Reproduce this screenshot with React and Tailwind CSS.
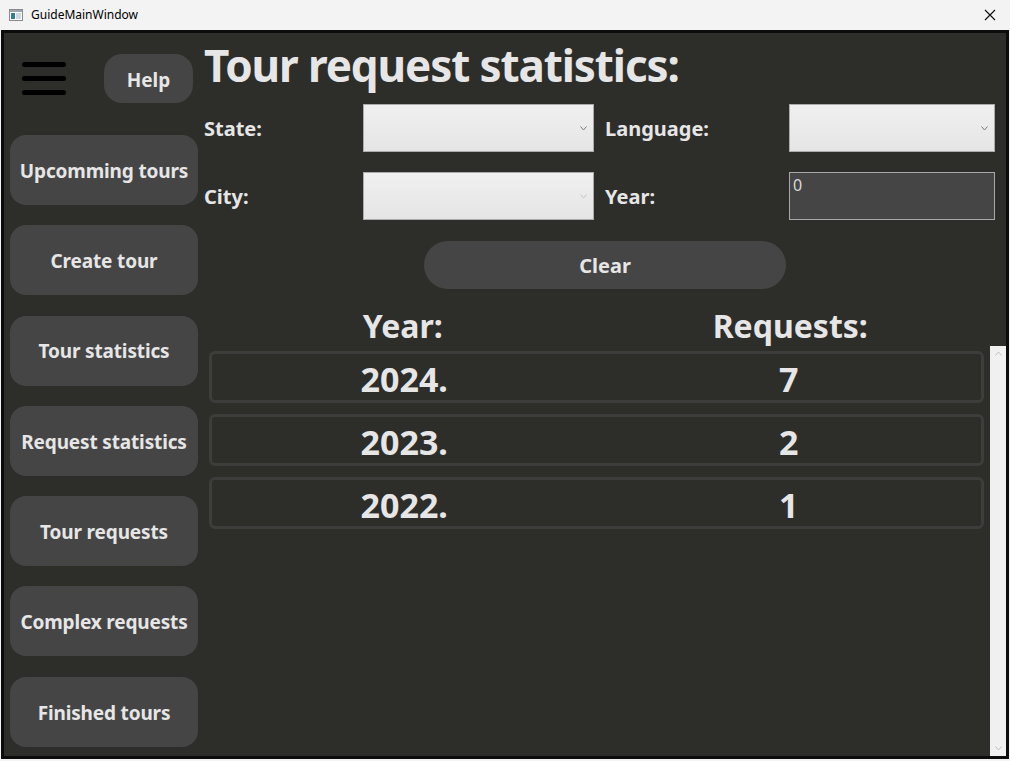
import React from "react";

const F = { fontFamily: '"Noto Sans", "Open Sans", sans-serif' };

function Chevron({ up = false, className = "" }) {
  return (
    <svg width="7" height="5" viewBox="0 0 7 5" className={className}>
      <path
        d={up ? "M0.5 4.5 L3.5 1 L6.5 4.5" : "M0.5 0.5 L3.5 4 L6.5 0.5"}
        fill="none"
        stroke="currentColor"
        strokeWidth="1"
      />
    </svg>
  );
}

function Combo({ faded = false }) {
  return (
    <div className="h-[48px] border border-[#acacac] bg-gradient-to-b from-[#f0f0f0] to-[#e5e5e5] flex items-center justify-end pr-[6px]">
      <Chevron className={faded ? "text-[#c4c4c4]" : "text-[#7a7a7a]"} />
    </div>
  );
}

const sideItems = [
  "Upcomming tours",
  "Create tour",
  "Tour statistics",
  "Request statistics",
  "Tour requests",
  "Complex requests",
  "Finished tours",
];

const rows = [
  ["2024.", "7"],
  ["2023.", "2"],
  ["2022.", "1"],
];

export default function App() {
  return (
    <div className="w-[1010px] h-[761px] bg-[#f3f3f3] flex flex-col overflow-hidden" style={F}>
      {/* title bar */}
      <div className="h-[30px] flex items-center pl-[9px] pr-[12px] shrink-0">
        <svg width="14" height="12" viewBox="0 0 14 12">
          <rect x="0.5" y="0.5" width="13" height="11" fill="#fff" stroke="#8a8a8a" />
          <rect x="1" y="1" width="12" height="2" fill="#9aa6b2" />
          <rect x="2" y="4" width="4" height="6" fill="#2f7f9a" />
          <rect x="7" y="4" width="5" height="6" fill="#cfd8dc" />
        </svg>
        <span className="ml-[8px] text-[12px] text-black" style={{ fontFamily: '"Noto Sans", sans-serif' }}>
          GuideMainWindow
        </span>
        <div className="flex-1" />
        <svg width="12" height="12" viewBox="0 0 12 12" className="mr-[2px]">
          <path d="M1 1 L11 11 M11 1 L1 11" stroke="#111" strokeWidth="1.2" />
        </svg>
      </div>

      {/* body */}
      <div className="flex-1 mx-[1px] mb-[2px] border-[3px] border-[#0c0c0c] bg-[#2d2d2a] flex min-h-0">
        {/* sidebar */}
        <div className="w-[199px] shrink-0 flex flex-col pl-[6px] pr-[5px]">
          <div className="flex items-center mt-[21px] h-[49px]">
            <div className="ml-[12px] w-[44px] flex flex-col gap-[9px]">
              <div className="h-[5px] rounded-full bg-black" />
              <div className="h-[5px] rounded-full bg-black" />
              <div className="h-[5px] rounded-full bg-black" />
            </div>
            <div className="ml-[38px] w-[89px] h-[49px] pt-[3px] rounded-[18px] bg-[#454545] flex items-center justify-center text-[19px] font-bold text-[#e6e6e6]">
              Help
            </div>
          </div>
          <div className="mt-[32px] flex flex-col gap-[20.3px]">
            {sideItems.map((t) => (
              <div
                key={t}
                className="h-[70px] pt-[2px] rounded-[16px] bg-[#454545] flex items-center justify-center text-[19px] font-bold text-[#e6e6e6] tracking-[-0.15px]"
              >
                {t}
              </div>
            ))}
          </div>
        </div>

        {/* main */}
        <div className="flex-1 flex flex-col min-w-0 pl-[1px]">
          <div className="h-[71px] pt-[4px] text-[44px] leading-[56px] font-bold text-[#e6e6e6] tracking-[-1.1px]">
            Tour request statistics:
          </div>
          <div className="grid grid-cols-[159px_231px_195px_206px] gap-y-[20px] pr-[9px] items-center text-[20px] font-bold text-[#e6e6e6]">
            <div className="pt-[2px]">State:</div>
            <Combo />
            <div className="pl-[11px] pt-[2px]">Language:</div>
            <Combo />
            <div className="pt-[2px]">City:</div>
            <Combo faded />
            <div className="pl-[11px] pt-[2px]">Year:</div>
            <div className="h-[48px] border border-[#a8a8a8] bg-[#454545] px-[3px] text-[16px] font-normal leading-[24px] text-[#d8d8d8]">
              0
            </div>
          </div>
          <div className="flex justify-center mt-[21px]">
            <div className="w-[362px] h-[48px] pt-[2px] rounded-[24px] bg-[#454545] flex items-center justify-center text-[20px] font-bold text-[#e6e6e6]">
              Clear
            </div>
          </div>
          <div className="grid grid-cols-2 pl-[5px] pr-[22px] h-[57px] items-center text-[32px] font-bold text-[#e6e6e6] pt-[13px]">
            <div className="text-center">Year:</div>
            <div className="text-center">Requests:</div>
          </div>
          <div className="flex-1 flex min-h-0">
            <div className="flex-1 pl-[5px] pr-[6px] pt-[5px] flex flex-col gap-[11px]">
              {rows.map(([y, n]) => (
                <div
                  key={y}
                  className="h-[52px] pt-[3px] border-[3px] border-[#3d3d3b] rounded-[6px] grid grid-cols-2 items-center text-[34px] font-bold text-[#e6e6e6]"
                >
                  <div className="text-center leading-none">{y}</div>
                  <div className="text-center leading-none">{n}</div>
                </div>
              ))}
            </div>
            <div className="w-[16px] bg-[#f0f0f0] flex flex-col items-center justify-between py-[5px] text-[#c2c2c2]">
              <Chevron up />
              <Chevron />
            </div>
          </div>
        </div>
      </div>
    </div>
  );
}
